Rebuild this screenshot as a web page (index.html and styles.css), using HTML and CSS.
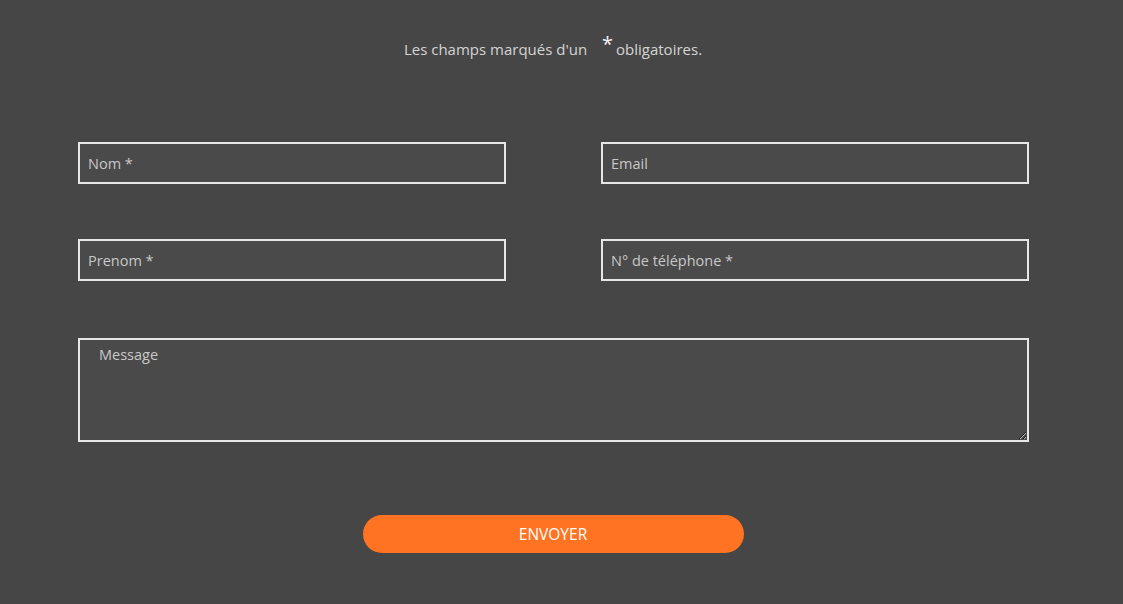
FILE: index.html
```html
<!DOCTYPE html>
<html lang="fr">
<head>
<meta charset="utf-8">
<title>Contact</title>
<link rel="stylesheet" href="styles.css">
</head>
<body>
<div class="page">
  <p class="note">Les champs marqués d'un <span class="star">*</span>obligatoires.</p>
  <form class="form">
    <div class="grid">
      <input class="field" type="text" placeholder="Nom *">
      <input class="field" type="email" placeholder="Email">
      <input class="field" type="text" placeholder="Prenom *">
      <input class="field" type="tel" placeholder="N° de téléphone *">
    </div>
    <textarea class="message" placeholder="Message"></textarea>
    <div class="actions">
      <button class="send" type="button">ENVOYER</button>
    </div>
  </form>
</div>
</body>
</html>
```

FILE: styles.css
```css
html, body {
  margin: 0;
  padding: 0;
  background: #464646;
  height: 100%;
}
body {
  font-family: "Open Sans", "Noto Sans", sans-serif;
  color: #d6d6d6;
}
.page {
  width: 1106px;
  display: flex;
  flex-direction: column;
  align-items: center;
}
.note {
  margin: 38px 0 0 0;
  font-size: 15px;
  line-height: 20px;
  color: #d4d4d4;
}
.star {
  display: inline-block;
  font-size: 20px;
  color: #f2f2f2;
  margin: 0 3px 0 11px;
  position: relative;
  top: -4px;
}
.form {
  width: 950px;
  margin-top: 83px;
  display: flex;
  flex-direction: column;
}
.grid {
  display: grid;
  grid-template-columns: 428px 428px;
  column-gap: 95px;
  row-gap: 55px;
}
.field {
  box-sizing: border-box;
  height: 42px;
  background: #4a4a4a;
  border: 2px solid #e6e6e6;
  padding: 0 8px;
  font-family: inherit;
  font-size: 14.5px;
  color: #eee;
  outline: none;
}
.field::placeholder, .message::placeholder {
  color: #c8c8c8;
  opacity: 1;
}
.message {
  box-sizing: border-box;
  margin-top: 57px;
  width: 951px;
  height: 104px;
  background: #4a4a4a;
  border: 2px solid #e6e6e6;
  padding: 5px 19px;
  font-family: inherit;
  font-size: 14.5px;
  color: #eee;
  outline: none;
  resize: vertical;
}
.actions {
  display: flex;
  justify-content: center;
  margin-top: 73px;
}
.send {
  width: 381px;
  height: 38px;
  border: none;
  border-radius: 19px;
  background: #ff7322;
  color: #fff;
  font-family: inherit;
  font-size: 15.5px;
  cursor: pointer;
}
```
